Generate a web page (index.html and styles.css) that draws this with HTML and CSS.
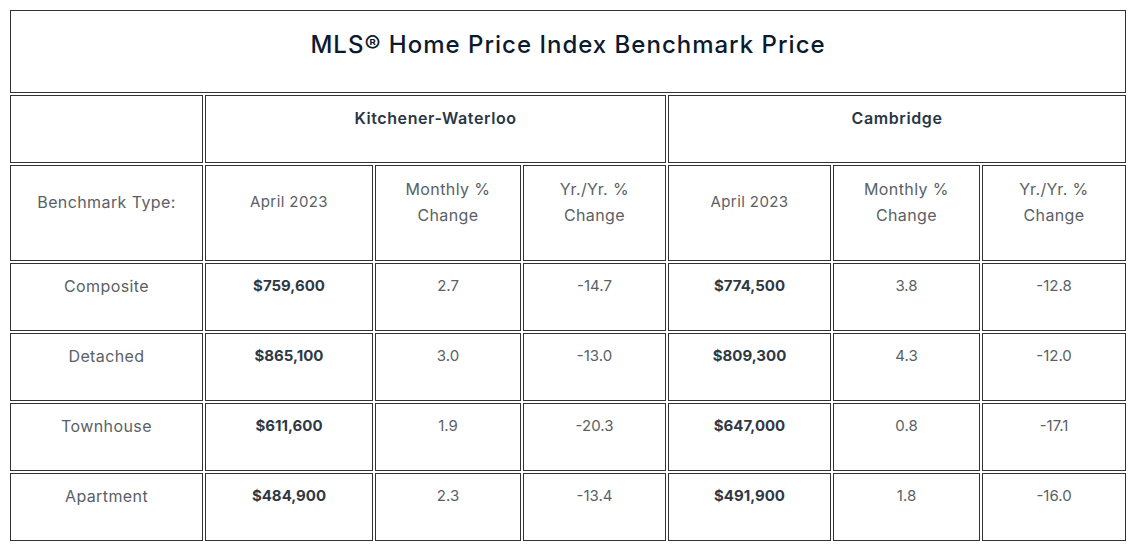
FILE: index.html
```html
<!DOCTYPE html>
<html>
<head>
<meta charset="utf-8">
<link rel="stylesheet" href="styles.css">
</head>
<body>
<table class="hpi">
  <colgroup>
    <col class="c1"><col class="c2"><col class="c3"><col class="c4"><col class="c5"><col class="c6"><col class="c7">
  </colgroup>
  <tr class="r-title">
    <td colspan="7" class="title"><h2>MLS® Home Price Index Benchmark Price</h2></td>
  </tr>
  <tr class="r-area">
    <td></td>
    <td colspan="3"><p class="area">Kitchener-Waterloo</p></td>
    <td colspan="3"><p class="area">Cambridge</p></td>
  </tr>
  <tr class="r-head">
    <td><p class="label">Benchmark Type:</p></td>
    <td><p class="date">April 2023</p></td>
    <td><p class="label">Monthly %<br>Change</p></td>
    <td><p class="label">Yr./Yr. %<br>Change</p></td>
    <td><p class="date">April 2023</p></td>
    <td><p class="label">Monthly %<br>Change</p></td>
    <td><p class="label">Yr./Yr. %<br>Change</p></td>
  </tr>
  <tr class="r-data">
    <td><p class="label">Composite</p></td>
    <td><p class="price">$759,600</p></td>
    <td><p>2.7</p></td>
    <td><p>-14.7</p></td>
    <td><p class="price">$774,500</p></td>
    <td><p>3.8</p></td>
    <td><p>-12.8</p></td>
  </tr>
  <tr class="r-data">
    <td><p class="label">Detached</p></td>
    <td><p class="price">$865,100</p></td>
    <td><p>3.0</p></td>
    <td><p>-13.0</p></td>
    <td><p class="price">$809,300</p></td>
    <td><p>4.3</p></td>
    <td><p>-12.0</p></td>
  </tr>
  <tr class="r-data">
    <td><p class="label">Townhouse</p></td>
    <td><p class="price">$611,600</p></td>
    <td><p>1.9</p></td>
    <td><p>-20.3</p></td>
    <td><p class="price">$647,000</p></td>
    <td><p>0.8</p></td>
    <td><p>-17.1</p></td>
  </tr>
  <tr class="r-data">
    <td><p class="label">Apartment</p></td>
    <td><p class="price">$484,900</p></td>
    <td><p>2.3</p></td>
    <td><p>-13.4</p></td>
    <td><p class="price">$491,900</p></td>
    <td><p>1.8</p></td>
    <td><p>-16.0</p></td>
  </tr>
</table>
</body>
</html>
```
FILE: styles.css
```css
html, body {
  background: #ffffff;
}
body {
  margin: 8px;
  font-family: "Inter", "Open Sans", sans-serif;
  color: #5a5f66;
}
.hpi {
  width: 1120px;
  table-layout: fixed;
  border-collapse: separate;
  border-spacing: 2px;
}
.c1 { width: 193px; }
.c2 { width: 168px; }
.c3 { width: 146px; }
.c4 { width: 143px; }
.c5 { width: 163px; }
.c6 { width: 147px; }
.c7 { width: 144px; }
.hpi td {
  border: 1px solid #333333;
  padding: 9px 10px 11px;
  text-align: center;
  vertical-align: middle;
  box-sizing: border-box;
}
.hpi p {
  margin: 0 0 20px;
  font-size: 15px;
  line-height: 26px;
  font-weight: 400;
}
.hpi p.label {
  font-size: 16px;
  letter-spacing: 0.4px;
}
.hpi p.date {
  letter-spacing: 0.4px;
}
.r-title { height: 83px; }
.r-area { height: 67px; }
.r-head { height: 96px; }
.r-data { height: 68px; }
.hpi td.title {
  padding: 0 10px;
}
.title h2 {
  margin: 0 0 13px;
  font-size: 24px;
  line-height: 32px;
  font-weight: 500;
  letter-spacing: 1px;
  color: #0c1a2e;
}
.hpi p.area {
  font-size: 16px;
  letter-spacing: 0.6px;
  font-weight: 600;
  color: #2a3644;
}
.hpi p.price {
  font-weight: 700;
  color: #2f3944;
}
```
